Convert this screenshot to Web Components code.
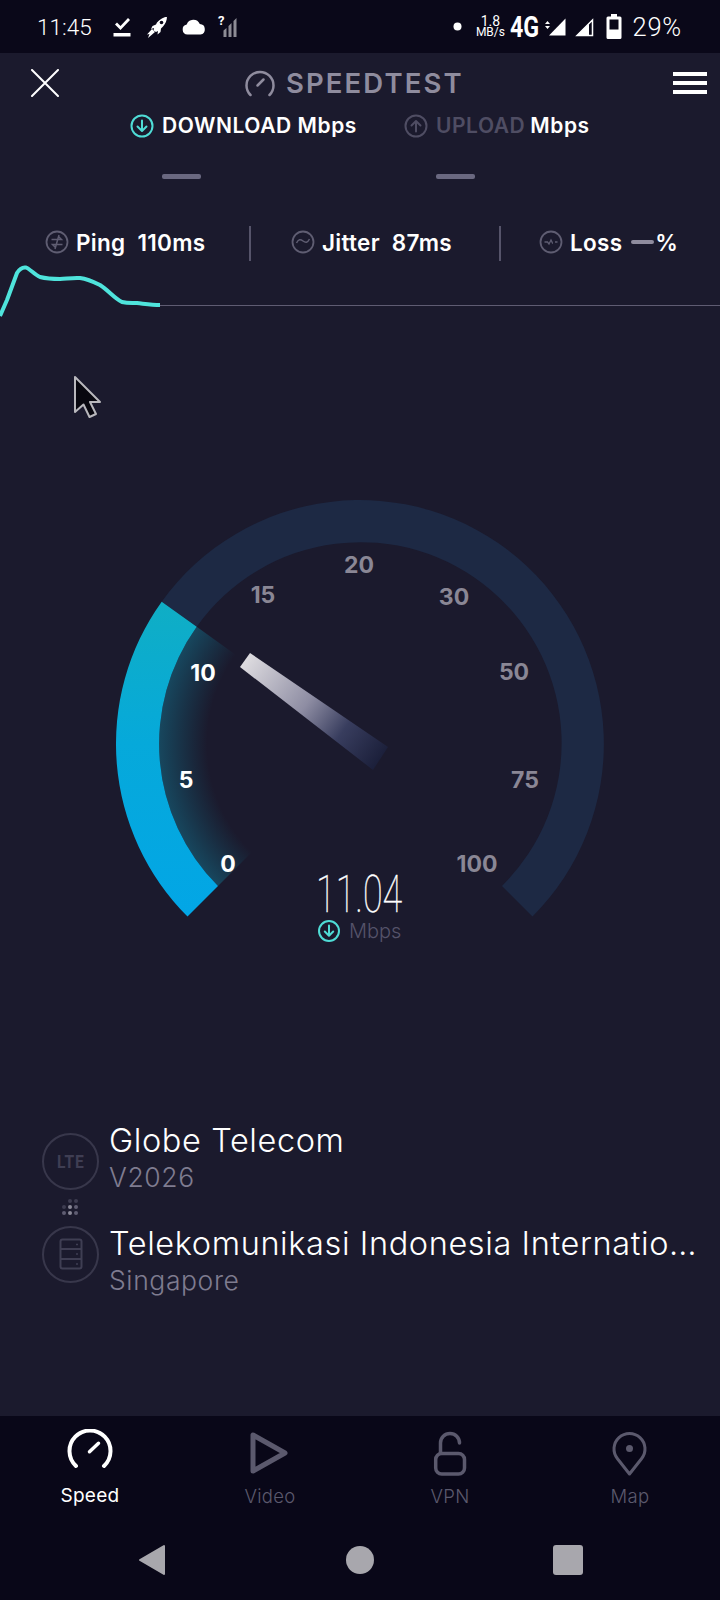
<!DOCTYPE html>
<html>
<head>
<meta charset="utf-8">
<style>
  html, body { margin: 0; padding: 0; background: #1b1a2d; }
  body { width: 720px; height: 1600px; overflow: hidden; font-family: Inter, "Liberation Sans", sans-serif; color: #fff; }
  speedtest-app { height: 1600px; }
</style>
</head>
<body>
<speedtest-app>
  <st-status></st-status>
  <st-header></st-header>
  <st-tabs></st-tabs>
  <st-stats></st-stats>
  <st-chart></st-chart>
  <st-gauge></st-gauge>
  <st-network>
    <st-isp slot="top" style="--shift:-8px" name="Globe Telecom" sub="V2026">
      <span class="lte" style="font:700 19px Roboto,sans-serif;color:#3f3e53;letter-spacing:1px;transform:scaleX(.82);display:block">LTE</span>
    </st-isp>
    <st-isp slot="bottom" style="--shift:13px" name="Telekomunikasi Indonesia International" sub="Singapore">
      <svg width="24" height="32" viewBox="0 0 24 32" fill="none" stroke="#3f3e53" stroke-width="2" style="display:block">
        <rect x="1.5" y="1.5" width="21" height="29" rx="2"/>
        <path d="M1.5 11h21M1.5 21h21"/>
        <path d="M17 6.500h2M17 16h2M17 26h2" stroke-width="1.500"/>
      </svg>
    </st-isp>
  </st-network>
  <st-nav>
    <st-nav-item label="Speed" active>
      <svg width="50" height="48" viewBox="0 0 50 48" fill="none" stroke="#fff" stroke-width="4" stroke-linecap="round">
        <path d="M11 37A20.500 20.500 0 1 1 39 37"/>
        <path d="M24.500 22.700l9-8.400" stroke-width="3.500"/>
      </svg>
    </st-nav-item>
    <st-nav-item label="Video">
      <svg width="50" height="48" viewBox="0 0 50 48" fill="none" stroke="#5b596d" stroke-width="5" stroke-linejoin="round">
        <path d="M8 6V42L40 24z"/>
      </svg>
    </st-nav-item>
    <st-nav-item label="VPN">
      <svg width="50" height="48" viewBox="0 0 50 48" fill="none" stroke="#5b596d" stroke-width="3.500">
        <rect x="10.700" y="24.500" width="28.800" height="20.500" rx="6"/>
        <path d="M15.500 24V14a9.500 9.500 0 0 1 19 0" stroke-linecap="round"/>
      </svg>
    </st-nav-item>
    <st-nav-item label="Map">
      <svg width="50" height="48" viewBox="0 0 50 48" fill="none" stroke="#5b596d" stroke-width="3">
        <path d="M24.500 45 12.300 29.500A15.500 15.500 0 1 1 36.700 29.500z" stroke-linejoin="round"/>
        <circle cx="24.500" cy="19.500" r="3.500" fill="#5b596d" stroke="none"/>
      </svg>
    </st-nav-item>
  </st-nav>
  <st-system-nav></st-system-nav>
</speedtest-app>

<script>
class SpeedtestApp extends HTMLElement {
  constructor() {
    super()
    this.attachShadow({ mode: 'open' }).innerHTML = `
      <style>
        :host { display: flex; flex-direction: column; position: relative; background: #1b1a2d; }
        svg { position: absolute; left: 73px; top: 375px; }
      </style>
      <slot></slot>
      <svg width="28" height="44" viewBox="0 0 28 44">
        <path d="M2 2v35l8.500-7.500 6 12.500 6.500-3-6-12h10z" fill="#08070f" stroke="#b9b8bd" stroke-width="2" stroke-linejoin="round"/>
      </svg>`
  }
}

class StStatus extends HTMLElement {
  constructor() {
    super()
    this.attachShadow({ mode: 'open' }).innerHTML = `
      <style>
        :host { display: flex; align-items: center; height: 53px; background: #0a0819; font-family: Roboto, sans-serif; color: #fff; flex: none; }
        .time { font-size: 22.500px; margin-left: 37px; width: 76px; font-weight: 300; }
        svg { display: block; flex: none; }
        .left { display: flex; align-items: center; }
        .right { margin-left: auto; display: flex; align-items: center; margin-right: 38px; }
        .rate { width: 32px; text-align: center; line-height: 11px; font-size: 12px; margin-left: 12px; }
        .rate b { display: block; font-weight: 400; font-size: 14px; }
        .net { font-size: 29px; font-weight: 700; width: 28px; margin-left: 4px; transform: scaleX(.8); transform-origin: left; }
        .pct { font-size: 25.500px; font-weight: 300; margin-left: 10px; letter-spacing: .8px; }
      </style>
      <div class="left">
        <span class="time">11:45</span>
        <svg width="18" height="20" viewBox="0 0 18 20" fill="#fff"><path d="M2 7.500 4 5.500l3.500 3.500L15 1l2 2-9.500 10z"/><rect x="0.500" y="16" width="17" height="3.500"/></svg>
        <svg style="margin-left:14px" width="24" height="24" viewBox="0 0 24 24" fill="#fff"><path d="M22.500 1.500c-4 .5-7.500 2.500-10.500 6l-1 2-3.500 1.500-1.500 3 3-1-.5 2.500 2.500 1.500 2-1-.5 3.500 3-2.500.5-3.500 2-2c2.500-3 4-6 4-10z"/><path d="M7 14l3 3-7 6 1.500-4L2 19.500z"/><circle cx="16.500" cy="7.500" r="1.800" fill="#0a0819"/></svg>
        <svg style="margin-left:13px" width="24" height="16" viewBox="0 0 24 16" fill="#fff"><path d="M5.500 15.500a5 5 0 0 1-.8-9.900A7 7 0 0 1 17.800 5a5.300 5.300 0 0 1 .7 10.500z"/></svg>
        <span style="position:relative;display:block;margin-left:12px;width:20px;height:20px">
          <svg width="20" height="20" viewBox="0 0 20 20" fill="#8d8c95"><path d="M18.500 1v19h-3V4zM13.500 6v14h-3V9zM8.500 11v9h-3v-6.500z"/></svg>
          <span style="position:absolute;left:0;top:-4px;font:700 13px Roboto,sans-serif">?</span>
        </span>
      </div>
      <div class="right">
        <svg width="9" height="9"><circle cx="4.500" cy="4.500" r="4" fill="#fff"/></svg>
        <span class="rate"><b>1.8</b>MB/s</span>
        <span class="net">4G</span>
        <svg style="margin-left:7px" width="21" height="20" viewBox="0 0 21 20" fill="#fff"><path d="M20.500 1.500v17H4z"/><path d="M2.500 4 5 7H0zM2.500 12 0 9h5z"/></svg>
        <svg style="margin-left:8px" width="20" height="20" viewBox="0 0 20 20" fill="none" stroke="#fff" stroke-width="1.500"><path d="M18.500 3v15.500H3z"/><path d="M15 18.500V6.500L3 18.500z" fill="#fff" stroke="none"/></svg>
        <svg style="margin-left:12px" width="16" height="25" viewBox="0 0 16 25" fill="#fff"><path d="M5 0h6v2.500h3a1.500 1.500 0 0 1 1.500 1.500v19.500A1.500 1.500 0 0 1 14 25H2a1.500 1.500 0 0 1-1.500-1.500V4A1.500 1.500 0 0 1 2 2.500h3z"/><rect x="3.500" y="5.500" width="9" height="10" fill="#0a0819"/></svg>
        <span class="pct">29%</span>
      </div>`
  }
}

class StHeader extends HTMLElement {
  constructor() {
    super()
    this.attachShadow({ mode: 'open' }).innerHTML = `
      <style>
        :host { display: flex; align-items: center; height: 60px; padding: 0 13px 0 31px; flex: none; }
        svg { display: block; flex: none; }
        .title { display: flex; align-items: center; margin-left: 186px; color: #8f8c9e; font-weight: 600; font-size: 27.500px; letter-spacing: 2.100px; }
        .title svg { margin-right: 11px; }
        .menu { margin-left: auto; }
      </style>
      <svg width="28" height="28" viewBox="0 0 28 28" stroke="#fff" stroke-width="2" stroke-linecap="round"><path d="M1 1l26 26M27 1 1 27"/></svg>
      <div class="title">
        <svg width="30" height="27" viewBox="0 0 30 27" fill="none" stroke="#8f8c9e" stroke-width="2.500" stroke-linecap="round"><path d="M5.500 25A13.500 13.500 0 1 1 24.500 25"/><path d="M12.500 15.500l6-6"/></svg>
        SPEEDTEST
      </div>
      <svg class="menu" width="34" height="22" viewBox="0 0 34 22" fill="#fff"><rect width="34" height="4"/><rect y="9" width="34" height="4"/><rect y="18" width="34" height="4"/></svg>`
  }
}

class StTabs extends HTMLElement {
  constructor() {
    super()
    const icon = (c, d) => `<svg width="24" height="24" viewBox="0 0 24 24" fill="none" stroke="${c}" stroke-width="2" stroke-linecap="round" stroke-linejoin="round"><circle cx="12" cy="12" r="10.500"/><path d="${d}"/></svg>`
    this.attachShadow({ mode: 'open' }).innerHTML = `
      <style>
        :host { display: block; flex: none; font-weight: 600; font-size: 21px; margin-top: 1px; }
        .row { display: flex; height: 24px; padding-left: 130px; line-height: 24px; }
        .tab { display: flex; align-items: center; width: 275px; letter-spacing: .55px; }
        .tab + .tab { margin-left: -1px; }
        svg { margin-right: 8px; flex: none; }
        .off { color: #4f4d63; margin-right: 5px; }
        .dashes { display: flex; gap: 235px; padding: 36px 0 0 162px; }
        .dashes i { display: block; width: 39px; height: 5px; border-radius: 2px; background: #6a6880; }
      </style>
      <div class="row">
        <div class="tab">${icon('#4fdcd6', 'M12 6.500v10M7.500 12.500l4.500 4.500 4.500-4.500')}DOWNLOAD&nbsp;Mbps</div>
        <div class="tab">${icon('#4f4d63', 'M12 17.500v-10M7.500 11.500l4.500-4.500 4.500 4.500')}<span class="off">UPLOAD</span>Mbps</div>
      </div>
      <div class="dashes"><i></i><i></i></div>`
  }
}

class StStats extends HTMLElement {
  constructor() {
    super()
    const icon = inner => `<svg width="24" height="24" viewBox="0 0 24 24" fill="none" stroke="#5f5d72" stroke-width="1.800"><circle cx="12" cy="12" r="10.500"/>${inner}</svg>`
    this.attachShadow({ mode: 'open' }).innerHTML = `
      <style>
        :host { display: flex; align-items: center; height: 36px; margin-top: 45px; padding-left: 45px; flex: none; font-weight: 600; font-size: 22.500px; letter-spacing: .3px; }
        .item { display: flex; align-items: center; }
        .item span { white-space: pre; }
        svg { flex: none; margin-right: 7px; }
        .sep { width: 2px; height: 35px; background: #56546a; flex: none; margin-top: 3px; }
        .dash { display: block; width: 23px; height: 4px; border-radius: 2px; background: #8f8c9e; margin: 0 1px 0 9px; }
      </style>
      <div class="item" style="width:204px">${icon('<path d="M6.500 9.500h10l-3-3M17.500 14.500h-10l3 3M14 5 10 19" stroke-width="1.500"/>')}<span>Ping  110ms</span></div>
      <div class="sep"></div>
      <div class="item" style="width:208px;margin-left:40px;margin-right:0">${icon('<path d="M5.500 13c2-4 4-4 6.500-2s4.500 2 6.500-2" stroke-width="1.500"/>')}<span>Jitter  87ms</span></div>
      <div class="sep"></div>
      <div class="item" style="margin-left:38px">${icon('<path d="M5.500 12h3l1.500 2 2-4 1.500 3h.5M16 12h2.500" stroke-width="1.300"/>')}<span>Loss</span><i class="dash"></i><span>%</span></div>`
  }
}

class StChart extends HTMLElement {
  constructor() {
    super()
    this.attachShadow({ mode: 'open' }).innerHTML = `
      <style>
        :host { display: block; height: 60px; margin-top: 3px; flex: none; }
        svg { display: block; }
      </style>
      <svg width="720" height="60" viewBox="0 263 720 60" fill="none">
        <path d="M160 305.500H720" stroke="#5f5c72" stroke-width="1"/>
        <path d="M0 316 7 300 17 273C20 268 23 267 26 267.500 30 269 35 275 40 277 48 279 54 279 60 279 68 278.500 74 277.500 80 278 88 279 94 282 100 285 108 290 114 298 122 302 128 303.500 132 303 137 303 146 304 152 305 160 305" stroke="#4fe4dc" stroke-width="4" stroke-linejoin="round"/>
      </svg>`
  }
}

class StGauge extends HTMLElement {
  constructor() {
    super()
    const label = (x, y, t, on) => `<text x="${x}" y="${y + 8.500}" text-anchor="middle" fill="${on ? '#fff' : '#8a8795'}">${t}</text>`
    const labels = [
      [228, 863, '0', 1], [186, 779, '5', 1], [203, 672, '10', 1],
      [263, 594, '15'], [359, 564, '20'], [454, 596, '30'],
      [514, 671, '50'], [525, 779, '75'], [477, 863, '100']
    ].map(l => label(...l)).join('')
    this.attachShadow({ mode: 'open' }).innerHTML = `
      <style>
        :host { display: block; height: 480px; margin-top: 157px; flex: none; }
        svg { display: block; }
        text { font-family: Inter, sans-serif; font-weight: 700; font-size: 23px; }
      </style>
      <svg width="720" height="480" viewBox="0 480 720 480">
        <defs>
          <linearGradient id="blue" gradientUnits="userSpaceOnUse" x1="0" y1="600" x2="0" y2="916">
            <stop offset="0" stop-color="#10aec4"/><stop offset=".45" stop-color="#06a9da"/><stop offset="1" stop-color="#02a6e6"/>
          </linearGradient>
          <radialGradient id="glow" gradientUnits="userSpaceOnUse" cx="360" cy="744" r="201">
            <stop offset=".76" stop-color="#0f6f88" stop-opacity="0"/>
            <stop offset="1" stop-color="#14718c" stop-opacity=".52"/>
          </radialGradient>
          <linearGradient id="needle" gradientUnits="userSpaceOnUse" x1="245" y1="660" x2="381" y2="759">
            <stop offset="0" stop-color="#dedce0"/><stop offset=".45" stop-color="#8e8da3"/><stop offset=".72" stop-color="#383d5e"/><stop offset="1" stop-color="#1b1f3a"/>
          </linearGradient>
        </defs>
        <path d="M161.700 601.700A244 244 0 1 1 532.500 916.500L502 886A201 201 0 1 0 196.700 626.800Z" fill="#1d2944"/>
        <path d="M218 886A201 201 0 0 1 196.700 626.800L242.200 659.500A145 145 0 0 0 257.500 846.500Z" fill="url(#glow)"/>
        <path d="M187.500 916.500A244 244 0 0 1 161.700 601.700L196.700 626.800A201 201 0 0 0 218 886Z" fill="url(#blue)"/>
        <path d="M250 653 240 667 373 770 388 747Z" fill="url(#needle)"/>
        ${labels}
        <g fill="none" stroke="#4fdcd6" stroke-width="2" stroke-linecap="round" stroke-linejoin="round">
          <circle cx="329" cy="931" r="10"/><path d="M329 925.500v10M324.800 931.500l4.200 4.200 4.200-4.200"/>
        </g>
        <text x="349" y="938" style="font-weight:300;font-size:20px" fill="#55536a">Mbps</text>
        <text x="316" y="912" transform="translate(316 0) scale(.69 1) translate(-316 0)" stroke="#fff" stroke-width=".4" style="font-family:Roboto,sans-serif;font-weight:100;font-size:52px" fill="#fff">11.04</text>
      </svg>`
  }
}

class StNetwork extends HTMLElement {
  constructor() {
    super()
    this.attachShadow({ mode: 'open' }).innerHTML = `
      <style>
        :host { display: block; margin-top: 171px; flex: none; position: relative; }
        .dots { display: grid; grid-template-columns: repeat(3, 4px); gap: 2px; width: 16px; margin: 8px 0 9px 62px; height: 16px; }
        .dots i { width: 4px; height: 4px; border-radius: 50%; background: #3d3c50; }
        .dots i.a { background: #8a8897; }
        .dots i.b { background: #5f5d72; }
        .dots i.h { background: transparent; }
      </style>
      <slot name="top"></slot>
      <div class="dots"><i class="h"></i><i></i><i></i><i></i><i class="a"></i><i class="b"></i><i class="b"></i><i class="a"></i><i class="b"></i></div>
      <slot name="bottom"></slot>`
  }
}

class StIsp extends HTMLElement {
  constructor() {
    super()
    const name = this.getAttribute('name')
    const sub = this.getAttribute('sub')
    this.attachShadow({ mode: 'open' }).innerHTML = `
      <style>
        :host { display: flex; align-items: center; height: 60px; padding-left: 42px; position: relative; }
        .ring { width: 53px; height: 53px; border: 2px solid #38374b; border-radius: 50%; display: flex; align-items: center; justify-content: center; flex: none; }
        .text { margin-left: 10px; width: 592px; margin-top: var(--shift, 0); }
        .name { font-size: 32.500px; font-weight: 300; line-height: 40px; letter-spacing: .6px; white-space: nowrap; overflow: hidden; text-overflow: ellipsis; }
        .sub { font-size: 26.500px; font-weight: 300; line-height: 33px; letter-spacing: .6px; color: #7f7c90; }
      </style>
      <div class="ring"><slot></slot></div>
      <div class="text"><div class="name">${name}</div><div class="sub">${sub}</div></div>`
  }
}

class StNav extends HTMLElement {
  constructor() {
    super()
    this.attachShadow({ mode: 'open' }).innerHTML = `
      <style>
        :host { display: grid; grid-template-columns: repeat(4, 180px); height: 112px; background: #090718; margin-top: auto; flex: none; }
      </style>
      <slot></slot>`
  }
}

class StNavItem extends HTMLElement {
  constructor() {
    super()
    this.attachShadow({ mode: 'open' }).innerHTML = `
      <style>
        :host { display: flex; flex-direction: column; align-items: center; padding-top: 13px; color: #5b596d; font-size: 18.500px; font-weight: 300; }
        :host([active]) { color: #fff; font-weight: 400; font-size: 19px; }
        .label { margin-top: 7px; line-height: 24px; letter-spacing: .3px; }
        ::slotted(svg) { display: block; }
      </style>
      <slot></slot>
      <div class="label">${this.getAttribute('label')}</div>`
  }
}

class StSystemNav extends HTMLElement {
  constructor() {
    super()
    this.attachShadow({ mode: 'open' }).innerHTML = `
      <style>
        :host { display: flex; align-items: center; height: 64px; padding: 0 0 8px 138px; background: #090718; flex: none; }
        svg { display: block; flex: none; }
      </style>
      <svg width="28" height="32" viewBox="0 0 28 32"><path d="M26 2v28L2 16z" fill="#a8a7ad" stroke="#a8a7ad" stroke-width="2" stroke-linejoin="round"/></svg>
      <svg style="margin-left:180px" width="28" height="28"><circle cx="14" cy="14" r="14" fill="#a8a7ad"/></svg>
      <svg style="margin-left:179px" width="30" height="30"><rect width="30" height="30" rx="3" fill="#a8a7ad"/></svg>`
  }
}

customElements.define('speedtest-app', SpeedtestApp)
customElements.define('st-status', StStatus)
customElements.define('st-header', StHeader)
customElements.define('st-tabs', StTabs)
customElements.define('st-stats', StStats)
customElements.define('st-chart', StChart)
customElements.define('st-gauge', StGauge)
customElements.define('st-network', StNetwork)
customElements.define('st-isp', StIsp)
customElements.define('st-nav', StNav)
customElements.define('st-nav-item', StNavItem)
customElements.define('st-system-nav', StSystemNav)
</script>
</body>
</html>
